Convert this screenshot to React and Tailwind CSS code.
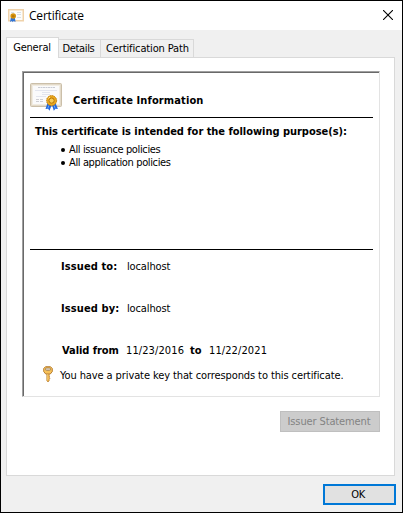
import React from "react";

function SmallCertIcon() {
  return (
    <svg width="16" height="14" viewBox="0 0 16 14" className="block">
      <rect x="0.75" y="0.75" width="14.5" height="11" fill="#fdfdfb" stroke="#efd2aa" strokeWidth="1.500" />
      <path d="M3 3.500h3M9 3.500h4M9 5.500h4M9 8.500h4" stroke="#d8e0e6" />
      <path d="M3 8L2 13l1.900-.9.900 1.200.8-1.200 1.900.9L6.800 8z" fill="#2f74d8" />
      <circle cx="5.200" cy="7" r="2.800" fill="#d6940e" />
      <circle cx="5.200" cy="7.200" r="1.300" fill="#b87808" />
    </svg>
  );
}

function CertIcon() {
  return (
    <svg width="34" height="30" viewBox="0 0 34 30" className="block">
      <rect x="0.5" y="0.5" width="31" height="23" rx="1" fill="#e3dac9" stroke="#cbbfa9" />
      <rect x="2.500" y="2.500" width="27" height="19" fill="#fafafb" stroke="#f1ece2" />
      <path d="M8 4.500h17" stroke="#c9cbd2" strokeDasharray="2 0.500" />
      <path d="M5 7.500h22M12 9.500h8M6 13.500h10M12 11.500h8" stroke="#e3e5ee" />
      <path d="M6 16.500h8M6 18.500h7" stroke="#cdcdd2" strokeDasharray="3 1" />
      <path d="M17.500 20l-2 6 2.600-.2 1.400 2 2.500-6.500zM21.800 21.300l2 6.500 1.700-2 2.400.2-2.400-6z" fill="#2468dc" />
      <path d="M18.800 22.500l-1 3M24.200 22.500l1 3" stroke="#6ba7f6" />
      <circle cx="21.600" cy="17.600" r="5" fill="#eaa920" stroke="#c47d08" strokeDasharray="1.500 .6" />
      <circle cx="21.600" cy="17.600" r="2.600" fill="#f8cb55" stroke="#b97605" />
      <path d="M18.500 15.500l1.500-1.500" stroke="#ffe596" />
    </svg>
  );
}

function KeyIcon() {
  return (
    <svg width="10" height="17" viewBox="0 0 10 17" className="block">
      <path d="M3.900 7.500h2.200v2.700l.7.800-.7.700.7.900-.7.900v1.200L5 15.900l-1.100-1.200z" fill="#f3b545" stroke="#a96917" strokeWidth="0.700" />
      <path d="M2.500.7h5L9.300 2.500v3L7.300 8H2.700L.7 5.500v-3z" fill="#f7c25a" stroke="#b17628" strokeWidth="0.900" />
      <rect x="2.500" y="2" width="5" height="2.400" rx="1" fill="#fff" stroke="#8f642c" strokeWidth="0.700" />
      <path d="M3 3.200h4" stroke="#8f642c" strokeWidth="0.500" />
      <path d="M4.800 8v6.500" stroke="#ffe39a" strokeWidth="0.700" />
    </svg>
  );
}

export default function App() {
  return (
    <div className="flex h-[513px] w-[403px] flex-col border border-black bg-[#f0f0f0] font-['DejaVu_Sans_Condensed','DejaVu_Sans',sans-serif] text-[11px] leading-[13px] whitespace-nowrap text-black">
      <header className="flex h-[29px] shrink-0 items-center bg-white pl-[7px]">
        <SmallCertIcon />
        <h1 className="ml-[5px] font-['Open_Sans',sans-serif] text-[12px] leading-4 tracking-[-0.2px]">Certificate</h1>
        <button className="mr-[9px] ml-auto pb-[2px]" aria-label="Close">
          <svg width="10" height="10" viewBox="0 0 10 10" className="block">
            <path d="M0 0l10 10M10 0L0 10" stroke="#000" strokeWidth="1.100" />
          </svg>
        </button>
      </header>

      <nav className="mt-[7px] ml-[5px] flex h-5 shrink-0 items-end">
        <button className="z-10 -mb-px h-[21px] w-[53px] shrink-0 border border-b-0 border-[#d9d9d9] bg-white pr-px pb-[2px] text-center tracking-[-0.2px]">General</button>
        <button className="h-[18px] w-[42px] shrink-0 border-t border-r border-[#d9d9d9] pr-[2px] tracking-[-0.35px]">Details</button>
        <button className="h-[18px] w-[93px] shrink-0 border-t border-r border-[#d9d9d9] pl-px tracking-[-0.13px]">Certification Path</button>
      </nav>

      <main className="ml-[5px] flex h-[419px] w-[389px] shrink-0 flex-col border border-[#d9d9d9] bg-white pt-[13px] pl-[15px]">
        <section className="h-[326px] w-[358px] shrink-0 border border-t-[#a0a0a0] border-r-[#e3e3e3] border-b-[#e3e3e3] border-l-[#a0a0a0]">
          <div className="h-full border-t border-l border-[#696969] pr-[6px] pl-[6px]">
            <div className="flex h-11 pt-[10px]">
              <CertIcon />
              <h2 className="mt-[11px] ml-[9px] font-bold tracking-[0.12px]">Certificate Information</h2>
            </div>
            <div className="h-px bg-black" />
            <div className="h-[131px] pt-[7px] pl-[5px]">
              <p className="font-bold tracking-[-0.03px]">This certificate is intended for the following purpose(s):</p>
              <ul className="mt-[5px] pl-[26px] tracking-[-0.37px]">
                <li className="flex items-center gap-1"><i className="size-1 rounded-full bg-black" />All issuance policies</li>
                <li className="flex items-center gap-1"><i className="size-1 rounded-full bg-black" />All application policies</li>
              </ul>
            </div>
            <div className="h-px bg-black" />
            <div className="flex pt-[10px] pl-[31px]">
              <b className="w-[66px] tracking-[0.1px]">Issued to:</b>
              <span className="tracking-[-0.13px]">localhost</span>
            </div>
            <div className="flex pt-[29px] pl-[31px]">
              <b className="w-[66px] tracking-[0.1px]">Issued by:</b>
              <span className="tracking-[-0.13px]">localhost</span>
            </div>
            <div className="flex pt-[29px] pl-[32px]">
              <b className="w-[64px] tracking-[-0.05px]">Valid from</b>
              <span className="w-16 tracking-[0.1px]">11/23/2016</span>
              <b className="w-[19px]">to</b>
              <span className="tracking-[0.1px]">11/22/2021</span>
            </div>
            <div className="flex pt-[9px] pl-[13px]">
              <KeyIcon />
              <p className="mt-[3px] ml-[7px] tracking-[-0.1px]">You have a private key that corresponds to this certificate.</p>
            </div>
          </div>
        </section>
        <button disabled className="mt-[14px] mr-[14px] h-[21px] w-[100px] shrink-0 self-end border border-[#bfbfbf] bg-[#cccccc] pr-[2px] tracking-[-0.12px] text-[#838383]">Issuer Statement</button>
      </main>

      <footer className="flex justify-end pt-2 pr-[6px]">
        <button className="h-[21px] w-[73px] border-2 border-[#0078d7] bg-[#e1e1e1] pr-[3px] tracking-[-0.3px]">OK</button>
      </footer>
    </div>
  );
}
